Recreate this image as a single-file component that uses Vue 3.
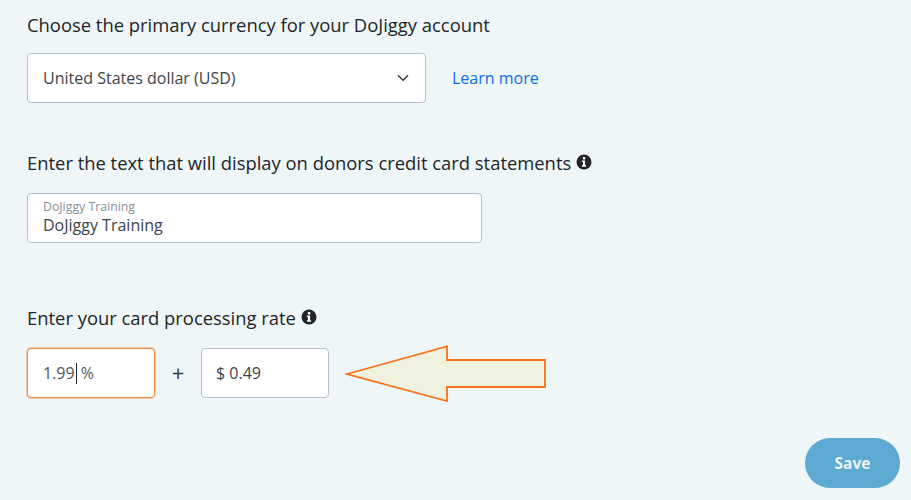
<template>
  <div class="page">
    <section class="currency">
      <h3 class="label">Choose the primary currency for your DoJiggy account</h3>
      <div class="row">
        <div class="field select">
          <span>United States dollar (USD)</span>
          <svg class="chevron" width="12" height="8" viewBox="0 0 12 8">
            <path d="M1 1.2 6 6.2l5-5" fill="none" stroke="#343a40" stroke-width="1.5" />
          </svg>
        </div>
        <a class="learn" href="#">Learn more</a>
      </div>
    </section>

    <section class="statement">
      <h3 class="label">
        Enter the text that will display on donors credit card statements
        <svg class="info" width="16" height="16" viewBox="0 0 16 16">
          <circle cx="8" cy="8" r="7.5" fill="#212529" />
          <rect x="6.9" y="3" width="2.4" height="2.4" rx="0.6" fill="#fff" />
          <path d="M5.9 6.6h3.2v4.7h1v1.4H5.9v-1.4h1V8H5.9z" fill="#fff" />
        </svg>
      </h3>
      <div class="field floating">
        <span class="float-label">DoJiggy Training</span>
        <span>DoJiggy Training</span>
      </div>
    </section>

    <section class="rate">
      <h3 class="label">
        Enter your card processing rate
        <svg class="info" width="16" height="16" viewBox="0 0 16 16">
          <circle cx="8" cy="8" r="7.5" fill="#212529" />
          <rect x="6.9" y="3" width="2.4" height="2.4" rx="0.6" fill="#fff" />
          <path d="M5.9 6.6h3.2v4.7h1v1.4H5.9v-1.4h1V8H5.9z" fill="#fff" />
        </svg>
      </h3>
      <div class="row">
        <div class="field small focused">
          <span class="muted">1.99</span><i class="caret"></i><span class="muted pct">%</span>
        </div>
        <span class="plus">+</span>
        <div class="field small amount">$ 0.49</div>
        <svg class="arrow" width="202" height="58" viewBox="0 0 202 58">
          <path d="M2 30 102 2.5V16h98v27h-98v14z" fill="#f0f2df" stroke="#f9731c" stroke-width="1.8" />
        </svg>
      </div>
    </section>

    <div class="actions">
      <button class="save">Save</button>
    </div>
  </div>
</template>

<script setup>
</script>

<style scoped>
.page {
  width: 911px;
  height: 500px;
  box-sizing: border-box;
  padding: 13px 11px 0 27px;
  background: #eff6f8;
  font-family: "Open Sans", "Liberation Sans", sans-serif;
  color: #212529;
  overflow: hidden;
}
.label {
  margin: 0;
  font-size: 18.4px;
  font-weight: 500;
  line-height: 24px;
  color: #212529;
}
.row {
  display: flex;
  align-items: center;
}
.field {
  box-sizing: border-box;
  height: 50px;
  background: #fff;
  border: 1px solid #b5c0cc;
  border-radius: 4px;
  font-size: 16px;
  color: #3d4349;
  display: flex;
  align-items: center;
}
.currency .row { margin-top: 16px; }
.select {
  width: 399px;
  padding: 0 15px;
  justify-content: space-between;
}
.chevron { margin-right: 1px; }
.learn {
  margin-left: 26px;
  font-size: 16px;
  font-weight: 500;
  color: #0d6fe0;
  text-decoration: none;
}
.statement { margin-top: 48px; }
.info {
  vertical-align: 0;
  margin-left: 0;
}
.floating {
  margin-top: 18px;
  width: 455px;
  padding: 0 15px;
  flex-direction: column;
  align-items: flex-start;
  justify-content: center;
  line-height: 22px;
}
.float-label {
  font-size: 12.3px;
  line-height: 14px;
  color: #8a8f96;
}
.rate { margin-top: 63px; }
.rate .row { margin-top: 14px; }
.small {
  width: 128px;
  padding: 0 15px;
}
.amount { padding-left: 14px; }
.focused {
  border-color: #ee8a45;
  box-shadow: 0 0 0 1px rgba(238, 138, 69, 0.4);
}
.muted { color: #4f565d; }
.pct { margin-left: 4px; }
.caret {
  display: inline-block;
  width: 1px;
  height: 21px;
  margin-left: 1px;
  background: #212529;
}
.plus {
  width: 46px;
  padding-bottom: 2px;
  text-align: center;
  font-size: 22px;
  color: #343a40;
}
.arrow {
  margin-left: 16px;
  flex-shrink: 0;
}
.actions {
  display: flex;
  justify-content: flex-end;
  margin-top: 36px;
}
.save {
  width: 95px;
  height: 50px;
  border: none;
  border-radius: 25px;
  background: #5ca9d1;
  color: #eaf4f9;
  font-family: inherit;
  font-size: 15.5px;
  font-weight: 700;
}
</style>
